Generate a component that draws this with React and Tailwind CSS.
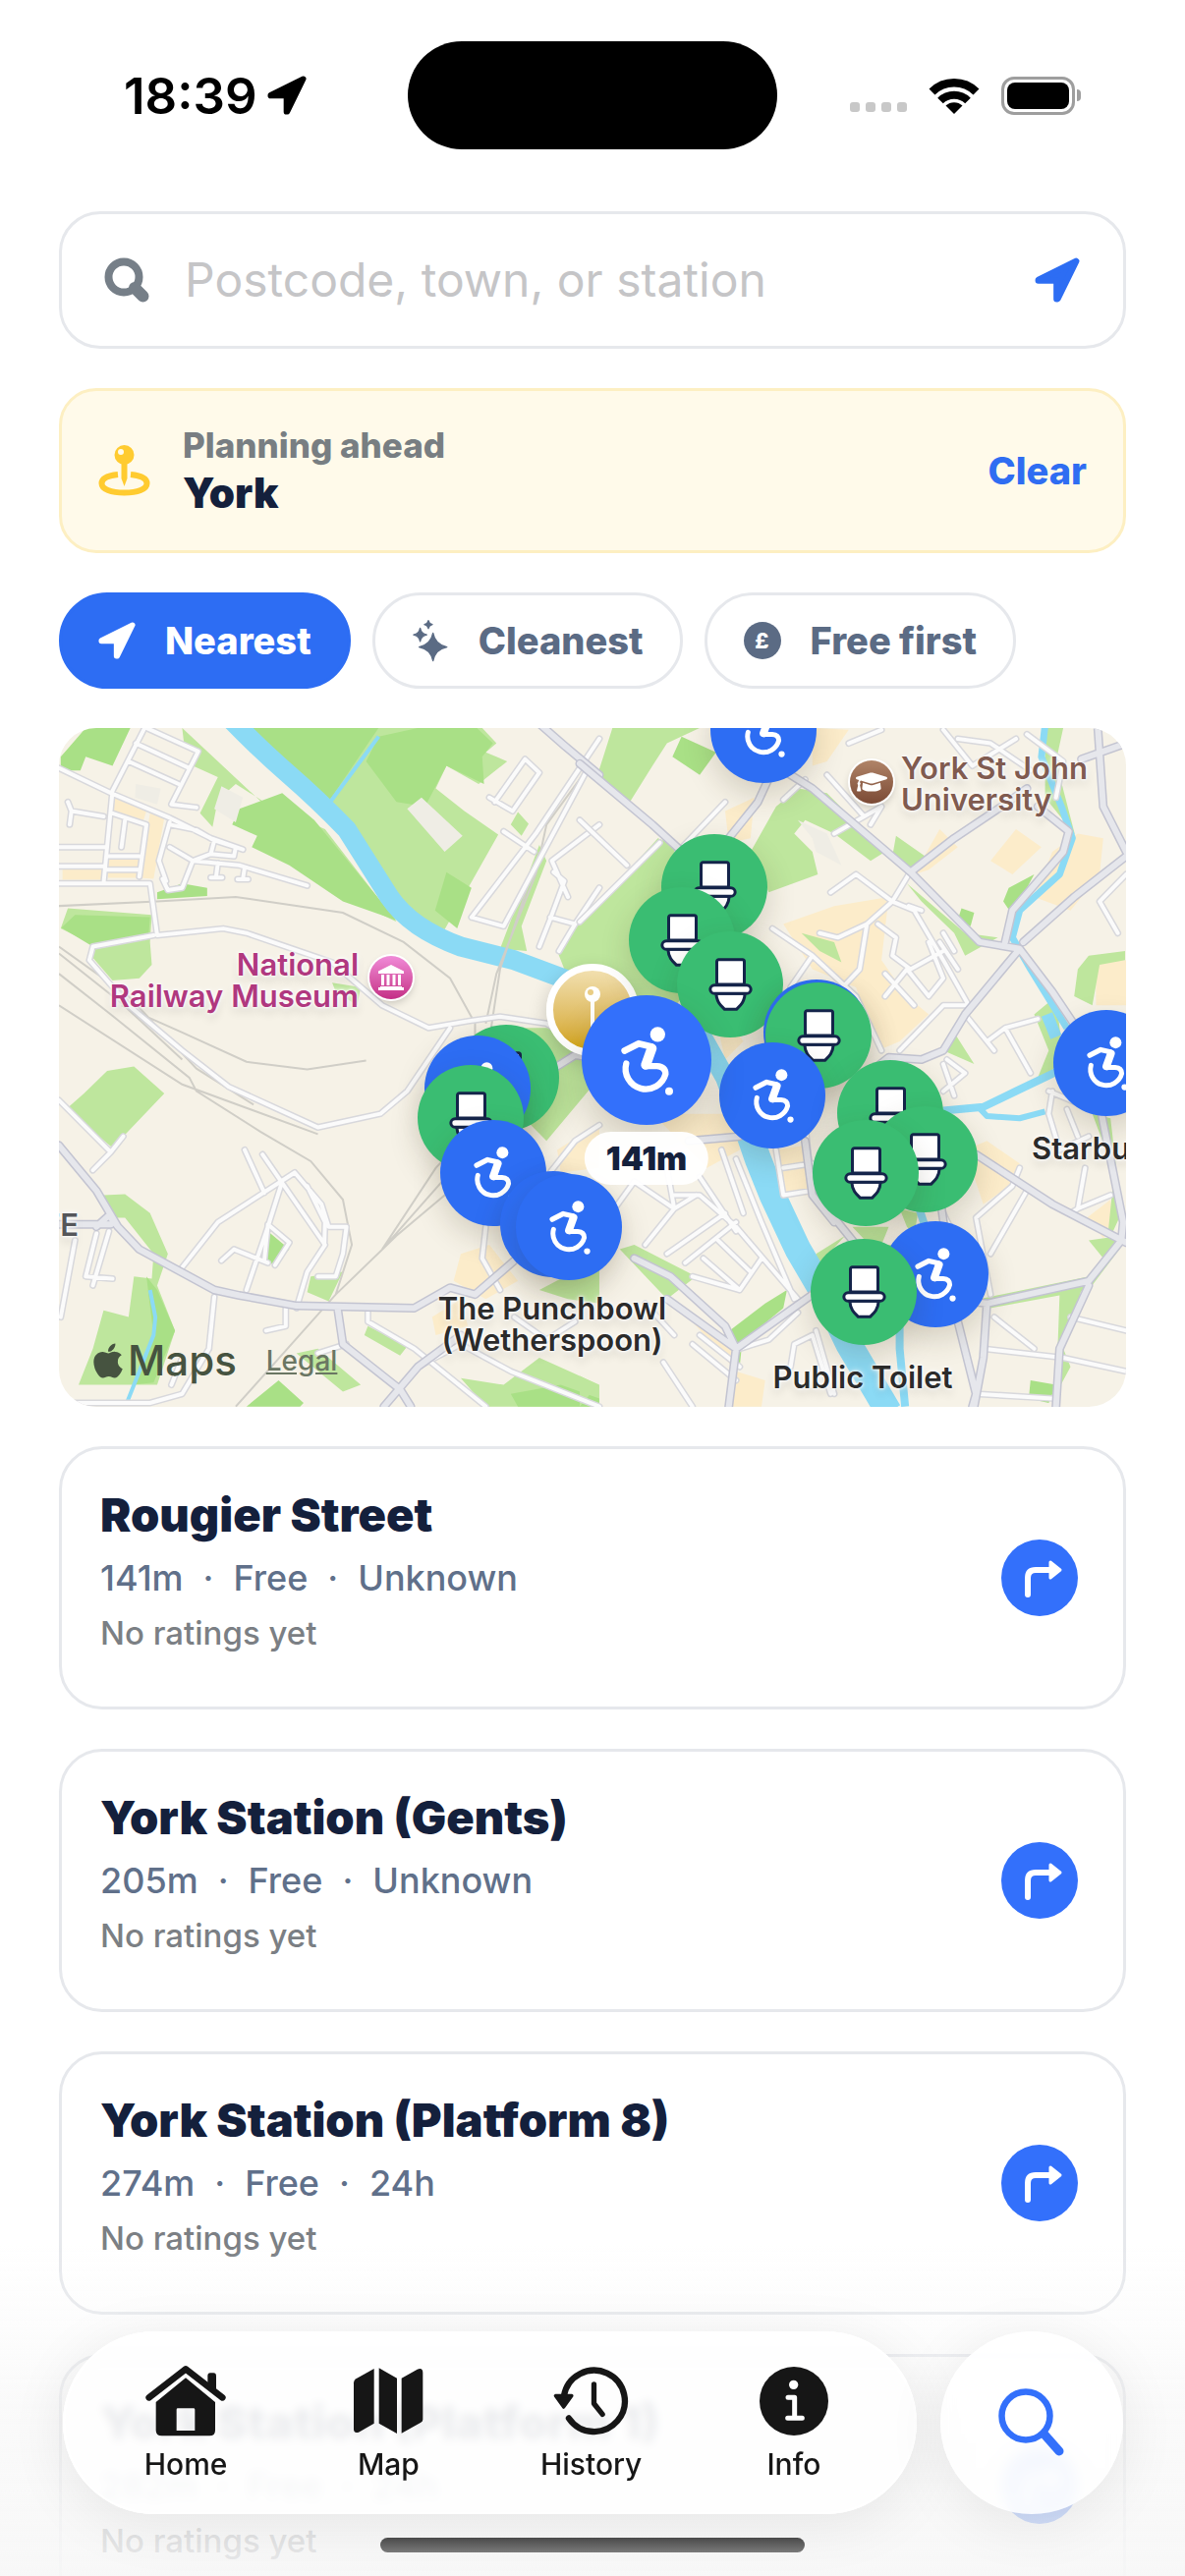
import { useState } from 'react';
import { FaApple, FaGraduationCap } from 'react-icons/fa';

const RESULTS = [
  { name: 'Rougier Street', facts: ['141m', 'Free', 'Unknown'] },
  { name: 'York Station (Gents)', facts: ['205m', 'Free', 'Unknown'] },
  { name: 'York Station (Platform 8)', facts: ['274m', 'Free', '24h'] },
  { name: 'York Station (Platform 1)', facts: ['282m', 'Free', '24h'] },
];

// Map canvas is 1086x690. Pin x/y are centres on that canvas, later pins paint on top.
const MAP_W = 1086;
const MAP_H = 690;

const PINS = [
  { kind: 'step', x: 717, y: 2 },
  { kind: 'toilet', x: 667, y: 162 },
  { kind: 'toilet', x: 634, y: 216 },
  { kind: 'toilet', x: 683, y: 261 },
  { kind: 'step', x: 771, y: 310 },
  { kind: 'toilet', x: 773, y: 313 },
  { kind: 'step', x: 726, y: 373 },
  { kind: 'toilet', x: 846, y: 391 },
  { kind: 'toilet', x: 881, y: 438 },
  { kind: 'toilet', x: 821, y: 452 },
  { kind: 'step', x: 892, y: 555 },
  { kind: 'toilet', x: 819, y: 573 },
  { kind: 'step', x: 1066, y: 341 },
  { kind: 'toilet', x: 455, y: 355 },
  { kind: 'step', x: 426, y: 366 },
  { kind: 'toilet', x: 419, y: 396 },
  { kind: 'step', x: 442, y: 452 },
  { kind: 'step', x: 503, y: 504 },
  { kind: 'step', x: 519, y: 507 },
];

// Two tiles, each in its own units. Strokes don't scale with the tile.
const TILES = [
  {
    transform: 'translate(-20 -12) scale(0.3635 0.4592)',
    light:
      'M400 26H560L800 200L1010 440L1135 472L1285 262L1190 210L1110 160L1140 110L1230 150L1310 100L1250 80L1280 60L1240 26H400L405 60L450 80L430 110L500 135L450 215L485 245L500 185L550 150L640 195L800 250L1000 455L960 440ZM1290 515L1400 285L1420 320L1350 465L1365 520ZM1320 240L1340 212L1370 238L1350 265ZM1500 465L1568 440V585L1470 560L1450 520ZM80 425L315 440L310 500L315 550L280 580L205 585L145 530L150 505L60 470ZM190 785L265 775L350 835L205 955L75 870L125 835ZM180 1060L240 1058L310 1100L360 1190L330 1260L380 1360L330 1480H110L150 1400L180 1315L250 1330L265 1240L315 1245L320 1190L240 1110L210 1110ZM760 1240L850 1230L810 1295L750 1275ZM920 1350L1030 1395L1010 1415L910 1370ZM720 1410L780 1400L900 1480L850 1495ZM1180 1465L1300 1480L1400 1420L1568 1480V1528H1250ZM1330 690L1568 690V800L1420 940L1370 900ZM820 590L900 600L890 640L830 610ZM1400 1270L1568 1200V1300L1480 1290Z',
    dark:
      'M560 26H950L805 195L700 130ZM560 205L680 170L770 230L1000 452L850 410L700 330L595 290L610 265L540 240ZM950 45L1060 26H1225L1270 60L1240 90L1245 150L1140 110L1080 200L1000 190L915 100ZM1140 345L1210 380L1170 470L1108 430ZM60 120L60 90L130 26H255L205 110L130 90L115 120ZM330 390L400 370L470 380V398L330 405ZM100 440L310 445L305 495L150 510L62 468ZM640 1140L700 1180L660 1215L630 1205ZM670 1470L740 1520L730 1528H580ZM300 1240L330 1270L380 1360L320 1475L260 1480L320 1370ZM1320 1500L1460 1480L1568 1510V1528H1340Z',
    urban:
      'M210 180L300 210L290 235L205 215ZM310 215L350 225L320 360L280 358ZM195 308H280V358H192ZM65 338H175V362H65ZM1180 1190L1260 1170L1340 1250L1250 1290L1160 1250ZM1450 960L1568 900V1000L1460 1010ZM1100 1330L1180 1290L1200 1350L1110 1370Z',
    plots: 'M1070 180L1185 265L1135 300L1030 205ZM510 155L570 180L550 235L490 205ZM270 150L340 160L330 195L268 180Z',
    water: [
      { w: 20, d: 'M540 10Q620 75 700 130T860 250L980 400Q1040 470 1180 510L1330 540L1568 610' },
      { w: 4, d: 'M950 45L805 200' },
      { w: 4, d: 'M310 1270L325 1330L320 1370L245 1520' },
    ],
    rails:
      'M55 420L330 410L550 400L850 435L1020 500L1150 580L1220 680V720M55 510L250 620L440 780L600 860M55 570L200 660L420 800L440 830L620 920L760 985L850 1070L875 1170L830 1280L550 1528M55 525L230 635L400 760M55 640L400 815L780 925M230 640L400 700L580 765L750 782L915 762M250 640L500 800M1540 110L1420 240L1390 350L1280 570L1250 680M1400 300L1290 560L1265 690M960 1180L1110 1000L1230 900M960 1180L1150 1010L1230 930M830 1280L1000 1150L1180 1030',
    minor:
      'M55 115L200 170L365 225L480 270L570 295M295 26L205 165L180 370M270 60L420 115M250 100L390 150M300 26L445 78L370 195L440 202M365 235L335 320L355 365M55 290H190M55 332H185M55 370H310L330 485M205 215L300 240L280 355M240 230L230 290M190 310H280M190 340H280M80 190L90 210L85 240M90 210L180 222M330 485L515 470L580 480L820 545L960 640L1090 690L1200 675L1290 665L1420 680L1500 720M320 485L150 510L140 540L250 640L400 740L530 820L780 910L955 880L1030 830L1150 690M365 290L430 320L480 305L490 275M365 240L440 252L490 275L570 295M430 320L400 380L360 385L345 360M430 320L560 330L750 375M500 325L495 355M480 357H512M575 335L570 360M555 361H585M480 305L545 310L550 290M55 850L200 965L235 930M200 965L150 1005M100 1160L60 1330M160 1145L130 1240L205 1245M195 1140L150 1260M400 1220L500 1120L715 1010L790 1080L810 1130L860 1130L850 1190L830 1240L780 1240M575 960L630 1055M680 1030L640 1130L580 1270M625 970L800 1170L750 1230L720 1310M750 1040L800 1120L798 1170M640 1125L700 1165L660 1215M640 1125L630 1205M510 1205L545 1180L640 1210M490 1285L475 1400M690 1310V1350L635 1360M920 1310V1340L1050 1400L1250 1528M55 1520H310L400 1500L475 1400M370 1480L400 1420M860 1390L780 1410M1060 1440L1180 1390L1320 1450L1568 1528M1250 1130L1240 1200L1290 1270M1420 1020L1500 940L1568 905M1210 445L1300 465L1540 110M1210 445L1390 260L1568 50M1260 180L1325 210L1400 125L1360 95L1275 190M1300 255L1385 300M1568 240L1435 320L1480 400M1440 345L1470 365L1430 450L1400 510M1430 445L1500 460L1568 380M1500 460L1455 520M1330 1330L1420 1380L1500 1340',
    major:
      'M1405 20L1470 65L1568 130M55 950L160 1050L220 1130L280 1180L490 1270L560 1282L720 1305L1050 1310L1150 1265L1220 1280L1330 1205M55 1125H200M160 1130L195 1105L220 1130M1420 790L1500 750L1568 760M835 1310L850 1390L1010 1490L1040 1528M965 1528L1060 1440L1180 1370',
  },
  {
    transform: 'translate(530 -12) scale(0.37 0.4592)',
    light:
      'M90 26H330L240 60L200 110L130 200L45 140ZM0 460L215 270L400 330L380 500L200 720L140 620L0 560ZM600 160L680 170L840 300L800 320L700 260L620 230L590 260L640 300L655 350L520 390L470 300L540 200ZM870 265L950 310L910 345L860 310ZM900 370L1060 480L1150 490L1060 530L1030 480L940 410ZM610 480L700 500L720 545L660 520ZM1280 26H1330L1310 100L1362 262L1280 180ZM1400 530L1500 520V540L1430 550L1410 640L1360 620L1370 560ZM1250 660L1310 620L1330 760L1250 820L1290 740ZM1030 700L1085 770L1000 740ZM1410 880L1460 890L1490 1100L1450 1170L1470 1010ZM1100 1290L1400 1240L1440 1200L1400 1160L1490 1150L1503 1160L1400 1270L1130 1310ZM110 1180L150 1170L320 1240L240 1290ZM650 1190L730 1150L640 1230ZM750 1130H850L830 1170H870L820 1190ZM880 1090L930 1100L920 1150L900 1130ZM0 1460L50 1480L0 1528ZM1320 1280L1380 1270L1330 1400L1350 1440L1310 1500Z',
    dark:
      'M280 45L375 80L330 130L255 90ZM1180 380L1250 350L1190 440L1165 410ZM380 1380L510 1300L570 1270L560 1310L440 1390ZM1240 1470L1310 1480L1290 1520L1235 1510ZM1050 425L1085 435L1075 465L1040 450ZM420 1400L445 1400L440 1440L418 1430Z',
    urban:
      'M640 26L740 30L680 100L640 110ZM1370 260L1440 270L1430 350L1350 430L1250 400L1300 300ZM1130 320L1200 250L1270 290L1190 350ZM1420 545L1503 540V640H1420ZM960 340L1040 290L990 250L920 350ZM560 460L700 420L850 400L830 540L900 620L960 660L880 720L820 740L760 600L640 560ZM1120 940L1210 990L1200 1030L1110 1080L1060 960ZM1395 1110L1460 1070L1470 1130L1440 1155ZM230 880L430 880L440 960L350 1000L200 880ZM540 960L620 950L640 1060L570 1060ZM310 1340L440 1400L430 1450ZM430 1450L510 1470L500 1528H400ZM360 620L450 720L400 760ZM400 210L480 180L470 270L410 280Z',
    plots: 'M600 230L680 260L720 330L650 300L640 270Z',
    water: [
      { w: 20, d: 'M330 700L400 800L460 930' },
      { w: 27, d: 'M460 910L490 980L530 1060L600 1180L680 1290L740 1390L850 1540' },
      { w: 7, d: 'M1280 20L1270 90L1325 200L1355 270L1320 350L1210 430L1190 490L1240 560L1340 690' },
      { w: 8, d: 'M1330 780L1200 830L1110 865L1000 873' },
      { w: 6, d: 'M1100 868L1120 885L1210 890L1280 875' },
      { w: 12, d: 'M1285 660L1310 710' },
      { w: 8, d: 'M930 1080L950 1130M880 1350V1400L895 1528' },
    ],
    rails: 'M210 640L150 700',
    minor:
      'M0 455L220 280M0 230L130 330M270 300L400 190M690 390L760 350L860 410L920 430L1000 540L1070 640M905 350L860 410L790 460L710 490L660 480M790 460L770 560L700 620M905 420L940 430M820 460L870 490L860 530L910 560L1000 520M840 570L920 640M960 500L1000 580L960 620L900 560L840 620M1000 480L1030 520M990 500L1040 560M880 740L1000 640L1070 640M530 470L640 530L760 620L830 740M640 530L580 600M1060 660L1120 720L1170 690L1260 670M1120 720L1140 740M1170 690L1240 790M1010 760L1060 790L1000 830M1000 770L1030 840M700 260L830 200L800 240M560 185L620 140M1040 50L1130 60L1240 120M1000 30L1080 110L1200 50M1230 40L1330 100L1310 180M1503 350L1430 410L1480 480M1300 830L1290 880L1320 960L1400 930M1340 870L1370 930M1290 830L1380 860M1390 1000L1370 1090L1460 1060M1370 1090L1350 1100M1210 1000L1190 1040L1090 1110L1130 1280M1230 1050L1130 1190M60 1130L150 1030L260 1090L180 1170M240 1000L260 1090L320 1060M260 1060L330 1060L430 1130L600 1290M330 1020L430 1140M240 1190L400 1100M290 1210L430 1120M310 1240L440 1270L500 1200M340 1200L440 1270M380 1160L470 1230M430 980L500 1120L590 1290M540 960L560 1060L640 1050M560 1000L640 990M620 900L640 1060M390 960L450 1100M440 1400L520 1380L600 1320M580 1440L590 1390L640 1370L690 1500M310 1390L430 1470M330 1370L440 1440M650 1360L700 1500M1110 1400L1330 1420L1503 1450M1140 1330L1250 1400M1090 1500L1300 1510M1350 1330L1503 1360M740 60L830 30M680 130L780 220M600 110L540 40M1000 1100L1060 1200M230 1430L310 1528M180 1300L260 1370',
    major:
      'M0 105L200 240L350 350M530 120L490 190L400 280M560 120L640 160L910 345L1100 500L1210 515L1300 610L1400 730L1440 900L1495 1120L1490 1160L1400 1250L1120 1300L1020 1290M910 345L1030 270L1160 200L1230 160M1260 200L1345 255L1330 300L1190 430L1170 500M1503 60L1380 95M1210 515L1060 660L1000 740L940 760L850 755L780 800M1220 500L1360 400L1503 310M1425 26L1440 200L1503 300M1503 1165L1300 1080L1090 970M300 940L440 930M150 1200L250 1240L400 1350L430 1400L410 1528M240 1290L430 1400L640 1280M690 1100L770 1180M990 1060L1040 1340L1090 1500L1080 1528M1120 1300L1110 1420L1085 1528M1400 1260L1320 1400L1310 1528M620 940L640 1060L700 1120',
  },
];

function Roads({ d, casing, fill, width }) {
  const common = {
    d,
    fill: 'none',
    strokeLinecap: 'round',
    strokeLinejoin: 'round',
    vectorEffect: 'non-scaling-stroke',
  };
  return (
    <>
      <path {...common} stroke={casing} strokeWidth={width} />
      <path {...common} stroke={fill} strokeWidth={width - 3} />
    </>
  );
}

function MapArt() {
  return (
    <svg
      viewBox={`0 0 ${MAP_W} ${MAP_H}`}
      preserveAspectRatio="none"
      className="absolute inset-0 h-full w-full"
      aria-hidden="true"
    >
      <rect width={MAP_W} height={MAP_H} fill="#f6f2e7" />
      {TILES.map((t) => (
        <g key={t.transform} transform={t.transform}>
          <path d={t.urban} fill="#fcecca" />
          <path d={t.light} fill="#bee69d" />
          <path d={t.dark} fill="#a9e086" />
          <path d={t.plots} fill="#efede5" />
        </g>
      ))}
      {TILES.map((t) => (
        <g key={t.transform} transform={t.transform} fill="none" stroke="#8bdaf5">
          {t.water.map((r) => (
            <path
              key={r.d}
              d={r.d}
              strokeWidth={r.w}
              strokeLinejoin="round"
              vectorEffect="non-scaling-stroke"
            />
          ))}
        </g>
      ))}
      {TILES.map((t) => (
        <g key={t.transform} transform={t.transform}>
          <path
            d={t.rails}
            fill="none"
            stroke="#d0cec7"
            strokeWidth="2"
            vectorEffect="non-scaling-stroke"
          />
          <Roads d={t.minor} casing="#d8d8dc" fill="#fbfbfb" width={7} />
          <Roads d={t.major} casing="#c3c4d1" fill="#e6e7ec" width={9} />
        </g>
      ))}
    </svg>
  );
}

function LocationArrow({ className }) {
  return (
    <svg viewBox="0 0 24 24" className={className} aria-hidden="true">
      <path
        d="M22 2 2 11.9V12.3H11.7V22H12.2Z"
        fill="currentColor"
        stroke="currentColor"
        strokeWidth="3.4"
        strokeLinejoin="round"
      />
    </svg>
  );
}

function WheelchairIcon({ className }) {
  return (
    <svg viewBox="-6 -6 180 230" className={className} aria-hidden="true">
      <g fill="none" stroke="#fff" strokeLinecap="round" strokeLinejoin="round">
        <path d="M17 79 60 57 98 66" strokeWidth="20" />
        <path d="M100 72 82 122" strokeWidth="30" />
        <path d="M80 126H116Q142 128 142 150A62 62 0 1 1 22 118" strokeWidth="19" />
      </g>
      <circle cx="118" cy="29" r="23" fill="#fff" />
      <circle cx="153" cy="203" r="12" fill="#fff" />
    </svg>
  );
}

function ToiletIcon({ className }) {
  return (
    <svg viewBox="0 0 140 168" className={className} aria-hidden="true">
      <g fill="#fff" stroke="#14244a" strokeWidth="9" strokeLinejoin="round">
        <rect x="28" y="8" width="84" height="76" rx="6" />
        <path d="M26 112C28 140 42 150 52 160H88C98 150 112 140 114 112Z" />
        <rect x="8" y="86" width="124" height="26" rx="13" />
      </g>
    </svg>
  );
}

function pinPosition(x, y) {
  return { left: `${(x / MAP_W) * 100}%`, top: `${(y / MAP_H) * 100}%` };
}

function Pin({ kind, x, y }) {
  return (
    <button
      type="button"
      aria-label={kind === 'step' ? 'Accessible toilet' : 'Toilet'}
      style={pinPosition(x, y)}
      className={
        'absolute flex size-[108px] -translate-x-1/2 -translate-y-1/2 items-center justify-center rounded-full shadow-[0_12px_30px_rgba(60,50,20,0.18)] ' +
        (kind === 'step' ? 'bg-[#2d6df3]' : 'bg-[#3abd72]')
      }
    >
      {kind === 'step' ? (
        <WheelchairIcon className="h-[60px] w-[47px]" />
      ) : (
        <ToiletIcon className="h-[56px] w-[47px]" />
      )}
    </button>
  );
}

// Place name on the map, with the white halo that lifts it off the roads.
function PlaceName({ x, y, align, className, children }) {
  const shift =
    align === 'right' ? '-translate-x-full text-right' : align === 'center' ? '-translate-x-1/2 text-center' : '';
  return (
    <p
      style={pinPosition(x, y)}
      className={
        'absolute -translate-y-1/2 whitespace-pre text-[31px] leading-8 font-semibold [text-shadow:0_0_3px_#fff,0_0_3px_#fff,0_0_6px_#fff,0_6px_10px_rgba(0,0,0,0.12)] ' +
        shift + ' ' + className
      }
    >
      {children}
    </p>
  );
}

function MapCard() {
  return (
    <section aria-label="Map" className="relative h-[691px] shrink-0 overflow-hidden rounded-[38px]">
      <MapArt />

      <PlaceName x={305} y={257} align="right" className="text-[#b0387f]">
        {'National\nRailway Museum'}
      </PlaceName>
      <span
        style={pinPosition(338, 254)}
        className="absolute flex size-11 -translate-x-1/2 -translate-y-1/2 items-center justify-center rounded-full bg-linear-to-b from-[#f08ad8] to-[#c42d86] shadow-[0_0_0_2px_#fff,0_4px_8px_rgba(0,0,0,0.2)]"
      >
        <svg viewBox="0 0 28 26" className="w-7" fill="#fff" aria-hidden="true">
          <path d="M14 0 27 6.5V9H1V6.5ZM3 22H25V23H27V26H1V23H3Z" />
          <path d="M4 10H7V21H4ZM9.500 10H12.500V21H9.500ZM15.500 10H18.500V21H15.500ZM21 10H24V21H21Z" />
        </svg>
      </span>

      <PlaceName x={857} y={57} align="left" className="text-[#805b50]">
        {'York St John\nUniversity'}
      </PlaceName>
      <span
        style={pinPosition(827, 55)}
        className="absolute flex size-11 -translate-x-1/2 -translate-y-1/2 items-center justify-center rounded-full bg-linear-to-b from-[#b08468] to-[#7b4a35] text-white shadow-[0_0_0_2px_#fff,0_4px_8px_rgba(0,0,0,0.2)]"
      >
        <FaGraduationCap className="size-8" aria-hidden="true" />
      </span>

      <PlaceName x={502} y={606} align="center" className="text-[#2b2b2b]">
        {'The Punchbowl\n(Wetherspoon)'}
      </PlaceName>
      <PlaceName x={818} y={660} align="center" className="text-[#2b2b2b]">
        Public Toilet
      </PlaceName>
      <PlaceName x={990} y={427} align="left" className="text-[#2b2b2b]">
        Starbucks
      </PlaceName>
      <PlaceName x={20} y={505} align="right" className="text-[#55565a]">
        GATE
      </PlaceName>

      {/* Where the search is centred */}
      <span
        style={pinPosition(543, 287)}
        className="absolute flex size-[94px] -translate-x-1/2 -translate-y-1/2 justify-center rounded-full border-[7px] border-white bg-linear-to-b from-[#f1dfae] to-[#d4a500] pt-4 shadow-[0_8px_20px_rgba(0,0,0,0.2)]"
      >
        <svg viewBox="0 0 16 48" className="h-12 w-4" aria-hidden="true">
          <path d="M8 8V46" stroke="#fff" strokeWidth="4" strokeLinecap="round" />
          <circle cx="8" cy="8" r="8" fill="#fff" />
          <circle cx="6" cy="6" r="3" fill="#e9cd84" />
        </svg>
      </span>

      {PINS.map((p) => (
        <Pin key={`${p.x}-${p.y}`} {...p} />
      ))}

      {/* Selected pin */}
      <button
        type="button"
        aria-label="Rougier Street, 141m"
        style={pinPosition(598, 338)}
        className="absolute flex size-[132px] -translate-x-1/2 -translate-y-1/2 items-center justify-center rounded-full bg-[#3370fb] shadow-[0_16px_36px_rgba(60,50,20,0.2)]"
      >
        <WheelchairIcon className="h-[77px] w-[60px]" />
      </button>
      <span
        style={pinPosition(598, 437)}
        className="absolute -translate-x-1/2 -translate-y-1/2 rounded-full bg-white/95 px-[22px] py-2 text-[33px] leading-[38px] font-black text-[#14203c]"
      >
        141m
      </span>

      <div className="absolute bottom-[26px] left-[30px] flex items-center gap-[30px] text-[#465340]">
        <span className="flex items-center text-[42px] leading-none font-medium">
          <FaApple className="size-10" aria-hidden="true" />
          Maps
        </span>
        <a href="#legal" className="text-[28px] leading-none font-medium text-[#6a7663] underline">
          Legal
        </a>
      </div>
    </section>
  );
}

function StatusBar() {
  return (
    <header className="grid grid-cols-[1fr_auto_1fr] items-center pt-[42px]">
      <div className="flex items-center gap-[10px] pl-[126px]">
        <time className="text-[51px] leading-none font-semibold">18:39</time>
        <LocationArrow className="size-[40px]" />
      </div>
      <div className="h-[110px] w-[376px] rounded-full bg-black" />
      <div className="flex items-center justify-end gap-[22px] pr-[106px]">
        <div className="flex gap-[6px] pt-6">
          <span className="size-[10px] rounded-[3px] bg-[#c8c8c8]" />
          <span className="size-[10px] rounded-[3px] bg-[#c8c8c8]" />
          <span className="size-[10px] rounded-[3px] bg-[#c8c8c8]" />
          <span className="size-[10px] rounded-[3px] bg-[#c8c8c8]" />
        </div>
        <svg viewBox="0 0 52 38" className="h-[38px] w-[52px]" fill="none" aria-label="Wi-Fi">
          <path d="M3.500 15.500A32 32 0 0 1 48.500 15.500" stroke="#000" strokeWidth="8.500" />
          <path d="M12 24.500A20 20 0 0 1 40 24.500" stroke="#000" strokeWidth="8" />
          <path d="M26 38 17.500 29.500A12.500 12.500 0 0 1 34.500 29.500Z" fill="#000" />
        </svg>
        <div className="flex items-center gap-[2px]">
          <div className="h-[39px] w-[75px] rounded-[13px] border-[3px] border-[#9e9e9e] p-[3px]">
            <div className="h-full rounded-[8px] bg-black" />
          </div>
          <div className="h-3 w-1 rounded-r-full bg-[#9e9e9e]" />
        </div>
      </div>
    </header>
  );
}

function SearchBox() {
  const [query, setQuery] = useState('');
  return (
    <form
      onSubmit={(e) => e.preventDefault()}
      className="flex h-[140px] shrink-0 items-center rounded-[42px] border-[3px] border-[#e6e8ec] bg-white pr-[44px] pl-[43px]"
    >
      <svg viewBox="0 0 46 46" className="size-[46px] shrink-0" fill="none" stroke="#767f88" aria-hidden="true">
        <circle cx="20" cy="20" r="15.500" strokeWidth="8" />
        <path d="M31 31 39.500 39.500" strokeWidth="12" strokeLinecap="round" />
      </svg>
      <input
        type="search"
        aria-label="Search"
        value={query}
        onChange={(e) => setQuery(e.target.value)}
        placeholder="Postcode, town, or station"
        className="ml-[36px] min-w-0 flex-1 bg-transparent text-[48px] leading-[60px] outline-none placeholder:text-[#c5c5c7]"
      />
      <button type="button" aria-label="Use my location" className="text-[#2d6df3]">
        <LocationArrow className="size-[46px]" />
      </button>
    </form>
  );
}

function PlanningBanner() {
  return (
    <section className="flex h-[168px] shrink-0 items-center rounded-[38px] border-[3px] border-[#fdefc2] bg-[#fffaea] px-[37px]">
      <svg viewBox="0 0 53 52" className="h-[52px] w-[53px]" aria-hidden="true">
        <path
          d="M20 30C10 31 3.500 34 3.500 39C3.500 45 13 48.500 26.500 48.500S49.500 45 49.500 39C49.500 34 43 31 33 30"
          fill="none"
          stroke="#ffcb30"
          strokeWidth="6"
        />
        <path d="M23.500 17H29.500V34L26.500 42 23.500 34Z" fill="#ffcb30" />
        <circle cx="26.500" cy="10" r="10" fill="#ffcb30" />
        <circle cx="23" cy="7" r="3" fill="#fffaea" />
      </svg>
      <div className="ml-[33px] flex-1">
        <p className="text-[35px] leading-[46px] font-extrabold text-[#787e82]">Planning ahead</p>
        <p className="text-[42px] leading-[52px] font-black text-[#14203c]">York</p>
      </div>
      <button type="button" className="text-[38px] font-extrabold text-[#2f6df2]">
        Clear
      </button>
    </section>
  );
}

function Star({ cx, cy, r }) {
  const k = r * 0.16;
  const d = `M${cx} ${cy - r}Q${cx + k} ${cy - k} ${cx + r} ${cy}Q${cx + k} ${cy + k} ${cx} ${cy + r}Q${cx - k} ${cy + k} ${cx - r} ${cy}Q${cx - k} ${cy - k} ${cx} ${cy - r}Z`;
  return <path d={d} fill="currentColor" stroke="currentColor" strokeWidth="4" strokeLinejoin="round" />;
}

function Chip({ active, icon, children }) {
  return (
    <button
      type="button"
      aria-pressed={active}
      className={
        'flex h-[98px] items-center gap-[30px] rounded-full px-[37px] text-[38px] font-extrabold ' +
        (active
          ? 'border-[3px] border-[#2d6df3] bg-[#2d6df3] text-white'
          : 'border-[3px] border-[#e6e8ec] bg-white text-[#5b6b84]')
      }
    >
      {icon}
      {children}
    </button>
  );
}

function Filters() {
  return (
    <div className="flex shrink-0 gap-[22px]">
      <Chip active icon={<LocationArrow className="size-[38px]" />}>
        Nearest
      </Chip>
      <Chip
        active={false}
        icon={
          <svg viewBox="0 0 108 128" className="h-[43px] w-[38px]" aria-hidden="true">
            <Star cx={62} cy={82} r={42} />
            <Star cx={23} cy={45} r={20} />
            <Star cx={48} cy={14} r={12} />
          </svg>
        }
      >
        Cleanest
      </Chip>
      <Chip
        active={false}
        icon={
          <span className="flex size-[38px] items-center justify-center rounded-full bg-[#5b6b84] text-[22px] leading-none font-extrabold text-white">
            £
          </span>
        }
      >
        Free first
      </Chip>
    </div>
  );
}

function ResultCard({ name, facts }) {
  return (
    <li className="flex h-[268px] shrink-0 items-center rounded-[44px] border-[3px] border-[#e6e8ec] bg-white pr-[46px] pl-[39px]">
      <div className="flex flex-1 flex-col gap-3 self-start pt-[39px]">
        <h2 className="text-[47px] leading-[56px] font-black text-[#14203c]">{name}</h2>
        <p className="flex gap-[20px] text-[36px] leading-[48px] font-medium text-[#60708a]">
          {facts.map((fact, i) => (
            <span key={fact} className="flex gap-[20px]">
              {i > 0 && <span aria-hidden="true">·</span>}
              {fact}
            </span>
          ))}
        </p>
        <p className="text-[33px] leading-10 font-medium text-[#7b7f84]">No ratings yet</p>
      </div>
      <button type="button" aria-label={`Directions to ${name}`} className="size-[78px] rounded-full bg-[#3370fb]">
        <svg viewBox="0 0 78 78" fill="none" stroke="#fff" strokeLinecap="round" strokeLinejoin="round" aria-hidden="true">
          <path d="M27 56V39Q27 31 35 31H50" strokeWidth="6" />
          <path d="M50 23 60 31 50 39Z" fill="#fff" strokeWidth="3" />
        </svg>
      </button>
    </li>
  );
}

function NavItem({ label, icon }) {
  return (
    <a href={`#${label.toLowerCase()}`} className="flex flex-1 flex-col items-center gap-2">
      <span className="flex h-[76px] items-center">{icon}</span>
      <span className="text-[30px] leading-9 font-medium">{label}</span>
    </a>
  );
}

function BottomBar() {
  return (
    <div className="fixed inset-x-0 bottom-0">
      <div className="pointer-events-none absolute inset-x-0 bottom-0 h-[340px] bg-linear-to-b from-[#f7f7f7]/0 via-[#f7f7f7]/60 to-[#f7f7f7]/90" />
      <div className="relative flex justify-between pr-[63px] pb-6 pl-[64px]">
        <nav className="flex h-[186px] w-[869px] items-center rounded-full bg-white/80 px-[22px] text-[#161616] shadow-[0_10px_60px_rgba(0,0,0,0.08),inset_0_0_0_2px_#fff] backdrop-blur-[5px]">
          <NavItem
            label="Home"
            icon={
              <svg viewBox="0 0 246 220" className="w-[82px]" fill="currentColor" aria-hidden="true">
                <path
                  d="M11 100 123 13 235 100"
                  fill="none"
                  stroke="currentColor"
                  strokeWidth="20"
                  strokeLinecap="round"
                  strokeLinejoin="round"
                />
                <path d="M190 34Q190 25 198 25H208Q216 25 216 34V84L190 64Z" />
                <path
                  fillRule="evenodd"
                  d="M123 40 213 114V200Q213 217 196 217H50Q32 217 32 200V114ZM99 133Q95 133 95 137V201H151V137Q151 133 147 133Z"
                />
              </svg>
            }
          />
          <NavItem
            label="Map"
            icon={
              <svg viewBox="0 0 216 203" className="w-[72px]" fill="currentColor" aria-hidden="true">
                <path d="M3 46Q3 38 10 34L65 3V170L18 197Q3 202 3 187Z" />
                <path d="M80 1 135 32V201L80 170Z" />
                <path d="M149 32 197 5Q214 -1 214 15V158Q214 164 208 167L149 200Z" />
              </svg>
            }
          />
          <NavItem
            label="History"
            icon={
              <svg
                viewBox="0 0 232 214"
                className="w-[77px]"
                fill="none"
                stroke="currentColor"
                strokeLinecap="round"
                strokeLinejoin="round"
                aria-hidden="true"
              >
                <path d="M33 92A94 94 0 1 1 48 161" strokeWidth="19" />
                <path d="M7 92H57L32 127Z" fill="currentColor" strokeWidth="10" />
                <path d="M125 57V116L151 149" strokeWidth="16" />
              </svg>
            }
          />
          <NavItem
            label="Info"
            icon={
              <svg viewBox="0 0 210 210" className="w-[70px]" fill="none" aria-hidden="true">
                <circle cx="105" cy="105" r="105" fill="currentColor" />
                <circle cx="104" cy="55" r="14" fill="#fff" />
                <path
                  d="M87 94H107V157M86 157H130"
                  stroke="#fff"
                  strokeWidth="15"
                  strokeLinecap="round"
                  strokeLinejoin="round"
                />
              </svg>
            }
          />
        </nav>
        <button
          type="button"
          aria-label="Search"
          className="flex size-[186px] items-center justify-center rounded-full bg-white/85 shadow-[0_10px_60px_rgba(0,0,0,0.08)] backdrop-blur-[7px]"
        >
          <svg viewBox="0 0 68 70" className="h-[70px] w-[68px]" fill="none" stroke="#3370fb" aria-hidden="true">
            <circle cx="28" cy="28" r="24.500" strokeWidth="6.500" />
            <path d="M47 47 62 64" strokeWidth="9" strokeLinecap="round" />
          </svg>
        </button>
      </div>
      <div className="relative mx-auto mb-6 h-[15px] w-[432px] rounded-full bg-linear-to-b from-[#4a4a4a] to-[#7a7a7a]" />
    </div>
  );
}

export default function App() {
  return (
    <div className="h-screen overflow-hidden bg-white font-['Inter','Liberation_Sans',sans-serif] text-black">
      <StatusBar />
      <main className="mt-[63px] flex flex-col gap-10 px-[60px]">
        <SearchBox />
        <PlanningBanner />
        <Filters />
        <MapCard />
        <ul className="flex flex-col gap-10">
          {RESULTS.map((r) => (
            <ResultCard key={r.name} {...r} />
          ))}
        </ul>
      </main>
      <BottomBar />
    </div>
  );
}
